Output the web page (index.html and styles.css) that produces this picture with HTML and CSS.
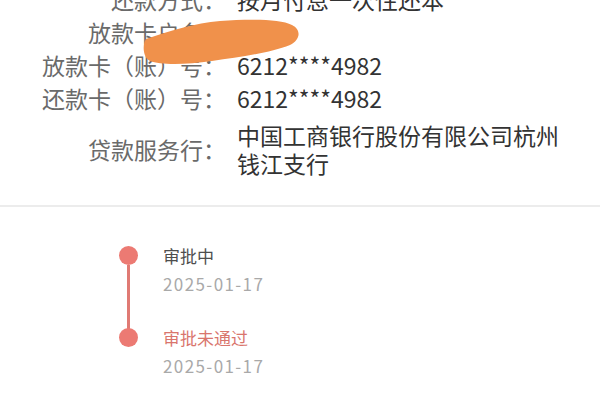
FILE: index.html
```html
<!DOCTYPE html>
<html lang="zh-CN">
<head>
<meta charset="utf-8">
<link rel="stylesheet" href="styles.css">
</head>
<body>
<div class="page">
  <section class="info">
    <div class="row"><span class="label">还款方式：</span><span class="value">按月付息一次性还本</span></div>
    <div class="row"><span class="label">放款卡户名：</span><span class="value"></span></div>
    <div class="row"><span class="label">放款卡（账）号：</span><span class="value">6212****4982</span></div>
    <div class="row"><span class="label">还款卡（账）号：</span><span class="value">6212****4982</span></div>
    <div class="row row-multi"><span class="label">贷款服务行：</span><span class="value">中国工商银行股份有限公司杭州钱江支行</span></div>
    <svg class="scribble" width="165" height="52" viewBox="0 0 165 52">
      <path d="M6 24 C30 16 55 8 80 6 C110 4 140 4 152 10 C162 15 160 25 150 30 C130 38 100 42 72 46 C45 50 20 50 10 46 C3 43 2 30 6 24 Z" fill="#f0914b"/>
    </svg>
  </section>
  <hr class="divider">
  <section class="timeline">
    <div class="tl-item">
      <div class="tl-mark"><span class="dot"></span><span class="line"></span></div>
      <div class="tl-text">
        <div class="tl-title">审批中</div>
        <div class="tl-date">2025-01-17</div>
      </div>
    </div>
    <div class="tl-item">
      <div class="tl-mark"><span class="dot"></span></div>
      <div class="tl-text">
        <div class="tl-title tl-fail">审批未通过</div>
        <div class="tl-date">2025-01-17</div>
      </div>
    </div>
  </section>
</div>
</body>
</html>
```
FILE: styles.css
```css
html, body {
  margin: 0;
  padding: 0;
  background: #ffffff;
  overflow: hidden;
}
body {
  font-family: "Noto Sans CJK SC", "Noto Sans", sans-serif;
  width: 600px;
  height: 400px;
}
.page {
  width: 600px;
}
.info {
  position: relative;
  margin-top: -17px;
  padding-bottom: 28px;
}
.row {
  display: flex;
  font-size: 23px;
  line-height: 33px;
  align-items: center;
}
.label {
  width: 226px;
  flex: none;
  text-align: right;
  color: #6a6a6a;
  white-space: nowrap;
}
.value {
  margin-left: 11px;
  width: 332px;
  color: #333333;
}
.row-multi {
  margin-top: 6px;
  line-height: 28px;
}
.scribble {
  position: absolute;
  left: 140px;
  top: 32px;
}
.divider {
  margin: 0;
  border: 0;
  height: 2px;
  background: #ececec;
}
.timeline {
  padding: 35px 0 0 118px;
}
.tl-item {
  display: flex;
  gap: 25px;
}
.tl-item:first-child {
  height: 82px;
}
.tl-mark {
  width: 20px;
  display: flex;
  flex-direction: column;
  align-items: center;
}
.dot {
  width: 19px;
  height: 19px;
  margin-top: 4px;
  border-radius: 50%;
  background: #ec7a73;
  flex: none;
}
.line {
  flex: 1;
  width: 3px;
  background: #e07a74;
  margin-bottom: -5px;
}
.tl-text {
  font-size: 17px;
  line-height: 28px;
}
.tl-title {
  color: #4e4e4e;
}
.tl-fail {
  color: #d9756d;
}
.tl-date {
  color: #a9a9a9;
  letter-spacing: 1.4px;
}
```
